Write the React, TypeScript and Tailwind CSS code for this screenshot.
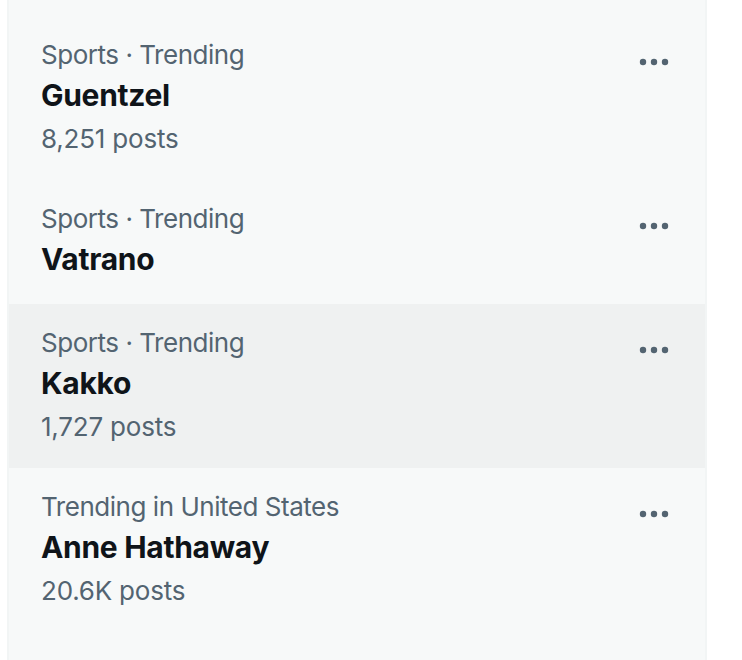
import React from "react";

const trends = [
  { meta: "Sports · Trending", name: "Guentzel", posts: "8,251 posts" },
  { meta: "Sports · Trending", name: "Vatrano", posts: "" },
  { meta: "Sports · Trending", name: "Kakko", posts: "1,727 posts", hover: true },
  { meta: "Trending in United States", name: "Anne Hathaway", posts: "20.6K posts" },
];

function Dots() {
  return (
    <svg width="38" height="38" viewBox="0 0 38 38" className="shrink-0">
      <circle cx="8" cy="19" r="3.2" fill="#536471" />
      <circle cx="19" cy="19" r="3.2" fill="#536471" />
      <circle cx="30" cy="19" r="3.2" fill="#536471" />
    </svg>
  );
}

export default function App() {
  return (
    <div className="w-[742px] h-[660px] bg-white overflow-hidden font-['Inter',sans-serif]">
      <div className="ml-[7px] w-[700px] h-full bg-[#f7f9f9] border-x-2 border-[#f2f5f5] pt-[16px]">
        {trends.map((t, i) => (
          <div
            key={i}
            className={`flex justify-between px-[32px] py-[24px] ${t.hover ? "bg-[#eff1f1]" : ""}`}
          >
            <div className="flex flex-col">
              <div className="text-[26px] leading-[32px] tracking-[-0.018em] text-[#536471] -mt-[1px] mb-[1px]">{t.meta}</div>
              <div className="text-[30px] leading-[40px] tracking-[-0.01em] font-bold text-[#0f1419] pt-[3px] pb-[1px]">{t.name}</div>
              {t.posts && (
                <div className="text-[26px] leading-[32px] tracking-[-0.008em] text-[#536471] mt-[7px] mb-[1px]">{t.posts}</div>
              )}
            </div>
            <div className="pt-[3px]">
              <Dots />
            </div>
          </div>
        ))}
      </div>
    </div>
  );
}
